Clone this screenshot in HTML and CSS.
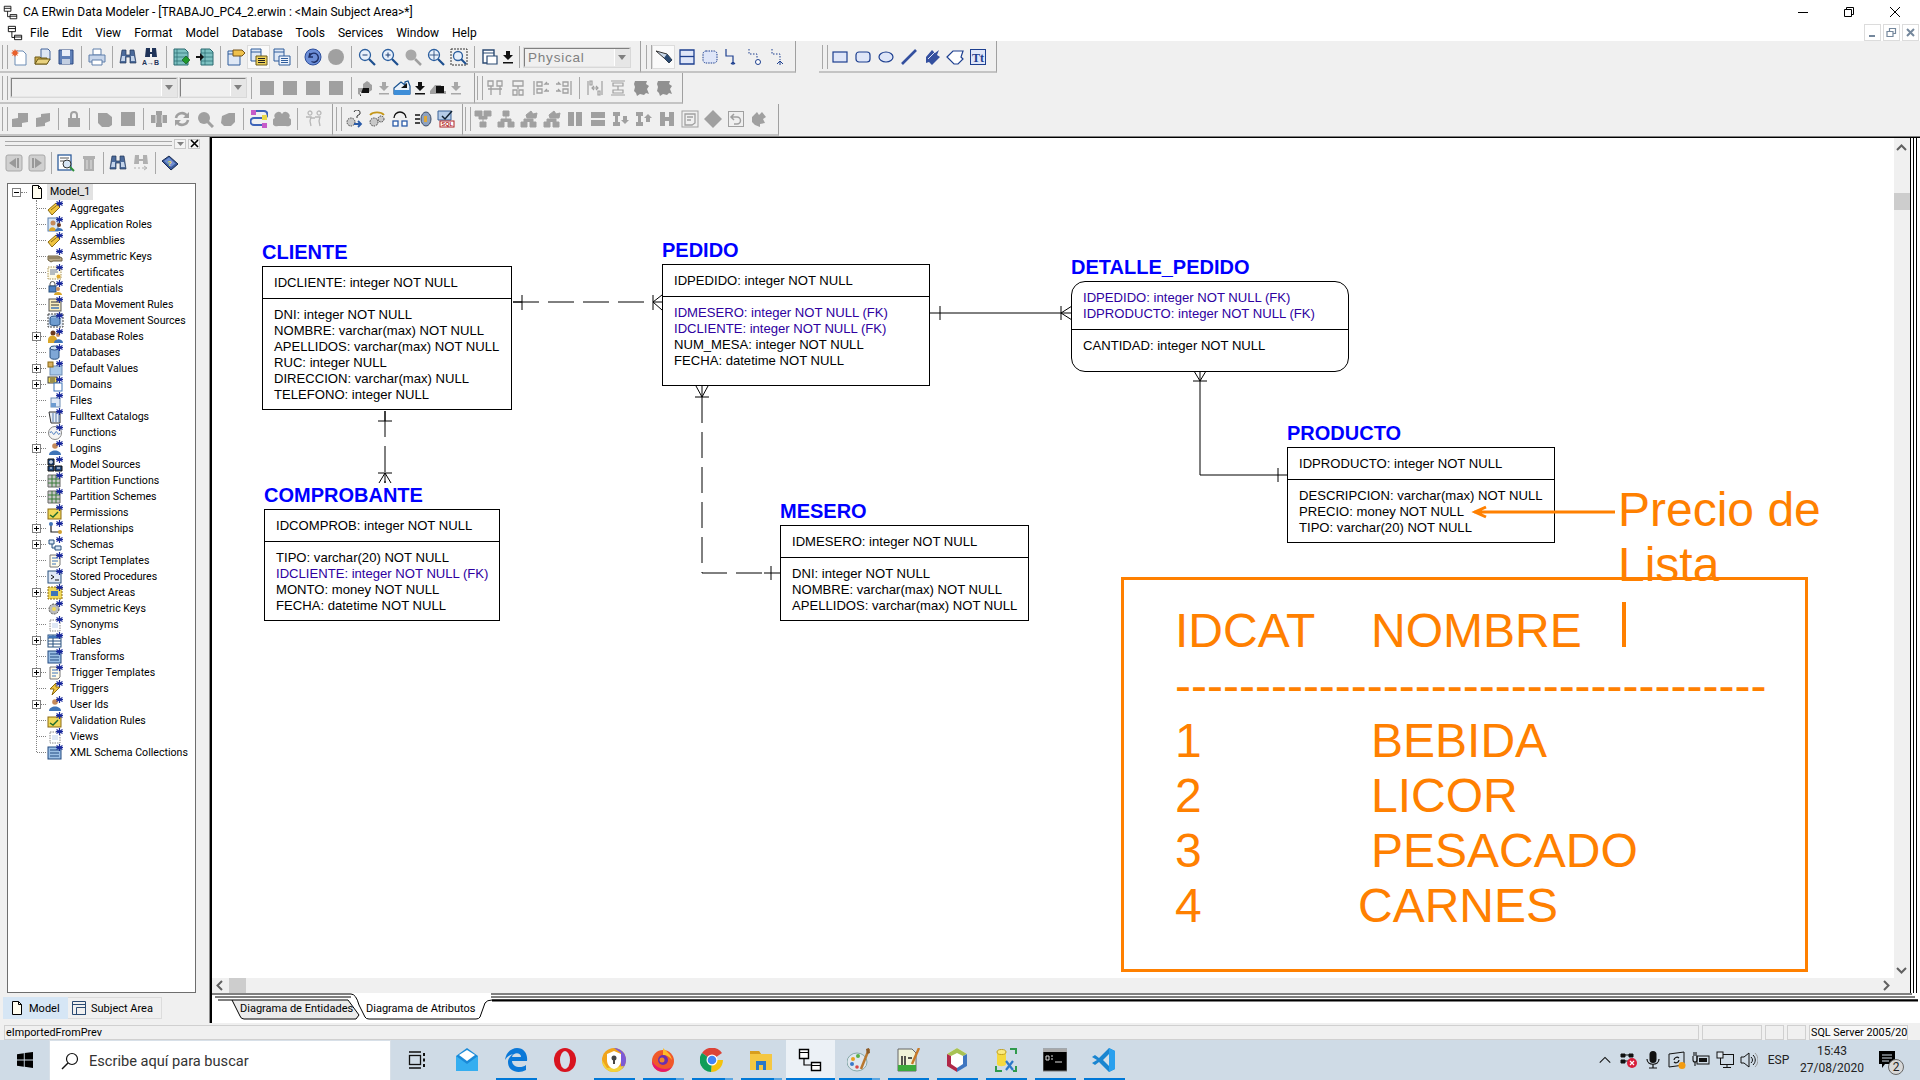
FILE: index.html
```html
<!DOCTYPE html>
<html lang="es">
<head>
<meta charset="utf-8">
<title>CA ERwin Data Modeler</title>
<link rel="stylesheet" href="styles.css">
</head>
<body>
<svg class="defs" width="0" height="0" aria-hidden="true">
<defs>
<symbol id="erd" viewBox="0 0 18 18"><path d="M1.5 1.5h8v6h-8zM1.5 4h8M8.5 11.5h8v5h-8zM8.5 13.5h8M5.5 7.5v6.5h3" fill="#fff" stroke="#000"/></symbol>
<symbol id="new" viewBox="0 0 18 18"><path d="M4 3h8l3 3v11H4z" fill="#fff" stroke="#6d8db5"/><path d="M4 1l1 2 2-1-1 2 2 1-2 1 1 2-2-1-1 2-1-2-2 1 1-2-2-1 2-1-1-2 2 1z" fill="#e8602c"/></symbol>
<symbol id="open" viewBox="0 0 18 18"><path d="M7 1h7l2 2v9H7z" fill="#dfe8f5" stroke="#44659b"/><path d="M1 9h5l1 1h6v6H1z" fill="#c9a94b" stroke="#6c5a18"/><path d="M1 16l3-5h12l-3 5z" fill="#e9d27f" stroke="#6c5a18"/></symbol>
<symbol id="save" viewBox="0 0 18 18"><path d="M2 2h14v14H2z" fill="#5f80b8" stroke="#2f4b82"/><path d="M5 2h8v6H5z" fill="#e8eef8"/><path d="M5 11h8v5H5z" fill="#c3cfe2"/></symbol>
<symbol id="print" viewBox="0 0 18 18"><path d="M5 1h8v6H5z" fill="#fff" stroke="#5e7eaa"/><path d="M1 7h16v7H1z" fill="#c7d5ea" stroke="#5e7eaa"/><path d="M4 12h10v5H4z" fill="#fff" stroke="#5e7eaa"/></symbol>
<symbol id="bino" viewBox="0 0 18 18"><path d="M3 2h4v5h4V2h4l2 13h-6V9H7v6H1z" fill="#4b6a9a" stroke="#1f3358" stroke-width=".7"/><path d="M3 8h3v5H2zM12 8h3l1 5h-4z" fill="#c4d4ea"/></symbol>
<symbol id="binoab" viewBox="0 0 18 18"><path d="M4 0h4v4h2V0h4l1 9h-5V6H8v3H3z" fill="#1f3358"/><text x="0" y="17" font-size="7" font-weight="700" font-family="Liberation Sans" fill="#1f3358">A→B</text></symbol>
<symbol id="entin" viewBox="0 0 18 18"><path d="M1 1h11l3 3v13H1z" fill="#7cc0c0" stroke="#2a6a70"/><path d="M4 1v16M1 5h14M1 9h14M1 13h14" stroke="#2a6a70" stroke-width=".7"/><path d="M13 8l4 4-4 4-4-4z" fill="#1f9a2c" stroke="#14491a" stroke-width=".6"/></symbol>
<symbol id="entout" viewBox="0 0 18 18"><path d="M5 1h9l3 3v13H5z" fill="#7cc0c0" stroke="#2a6a70"/><path d="M9 1v16M5 5h12M5 9h12M5 13h12" stroke="#2a6a70" stroke-width=".7"/><path d="M0 8h4V5l4 4-4 4v-3H0z" fill="#111"/></symbol>
<symbol id="tag" viewBox="0 0 18 18"><path d="M1 3h12v14H1z" fill="#dfe8f5" stroke="#2f5d9b"/><path d="M1 6h12" stroke="#2f5d9b"/><path d="M6 2h9l3 3-3 3H6z" fill="#efc14b" stroke="#77551a"/></symbol>
<symbol id="listy" viewBox="0 0 18 18"><path d="M1 1h10v12H1z" fill="#dfe8f5" stroke="#2f5d9b"/><path d="M1 4h10" stroke="#2f5d9b"/><path d="M6 8h11v9H6z" fill="#efd35d" stroke="#6c5a18"/><path d="M8 10.500h7M8 12.500h7M8 14.500h7" stroke="#222"/></symbol>
<symbol id="listb" viewBox="0 0 18 18"><path d="M1 1h10v12H1z" fill="#dfe8f5" stroke="#2f5d9b"/><path d="M1 4h10" stroke="#2f5d9b"/><path d="M6 8h11v9H6z" fill="#eef3fb" stroke="#2f5d9b"/><path d="M8 10.500h7M8 12.500h7M8 14.500h7" stroke="#2f5d9b"/></symbol>
<symbol id="undo" viewBox="0 0 18 18"><circle cx="9" cy="9" r="8" fill="#6d8fd8" stroke="#2c4e9c"/><path d="M6 5l-1 4 4 0M5.500 8.500a4.500 4.500 0 1 1 2 5" fill="none" stroke="#1d2f66" stroke-width="1.400"/></symbol>
<symbol id="dot" viewBox="0 0 18 18"><circle cx="9" cy="9" r="8" fill="#a0a0a0"/></symbol>
<symbol id="zoomm" viewBox="0 0 18 18"><circle cx="7" cy="7" r="5.500" fill="#e8f0fb" stroke="#2c5f9f" stroke-width="1.300"/><path d="M4.500 7h5" stroke="#1d3f75"/><path d="M11 11l6 6" stroke="#1d4f8f" stroke-width="2.200"/></symbol>
<symbol id="zoomp" viewBox="0 0 18 18"><circle cx="7" cy="7" r="5.500" fill="#e8f0fb" stroke="#2c5f9f" stroke-width="1.300"/><path d="M4.500 7h5M7 4.500v5" stroke="#1d3f75"/><path d="M11 11l6 6" stroke="#1d4f8f" stroke-width="2.200"/></symbol>
<symbol id="zoomg" viewBox="0 0 18 18"><circle cx="7" cy="7" r="5.500" fill="#a8a8a8"/><path d="M11 11l6 6" stroke="#a0a0a0" stroke-width="2.500"/></symbol>
<symbol id="zoomt" viewBox="0 0 18 18"><circle cx="7" cy="7" r="5.500" fill="#e8f0fb" stroke="#2c5f9f" stroke-width="1.300"/><path d="M7 2.500v9M2.500 7h9" stroke="#1d3f75" stroke-width=".8"/><path d="M11 11l6 6" stroke="#1d4f8f" stroke-width="2.200"/></symbol>
<symbol id="zoomf" viewBox="0 0 18 18"><path d="M1 1h16v16H1z" fill="none" stroke="#333" stroke-dasharray="2 1"/><circle cx="8" cy="8" r="4.500" fill="#e8f0fb" stroke="#2c5f9f" stroke-width="1.300"/><path d="M11 11l5 5" stroke="#1d4f8f" stroke-width="2"/></symbol>
<symbol id="layout" viewBox="0 0 18 18"><path d="M2 2h11v13H2z" fill="#fff" stroke="#2b4a72" stroke-width="1.400"/><path d="M2 5h11M6 8h10v8H6z" fill="#fff" stroke="#2b4a72" stroke-width="1.200"/></symbol>
<symbol id="down" viewBox="0 0 14 18"><path d="M7 12L2 7h3V3h4v4h3zM2 14h10v1.500H2z" fill="#111"/></symbol>
<symbol id="downg" viewBox="0 0 14 18"><path d="M7 12L2 7h3V3h4v4h3zM2 14h10v1.500H2z" fill="#a8a8a8"/></symbol>
<symbol id="point" viewBox="0 0 18 18"><path d="M1 3l11 3 5 6-3 3-5-5z" fill="#c9d8ea" stroke="#333"/><path d="M9 10l3-4 5 6-3 3z" fill="#2b4a72"/></symbol>
<symbol id="entity" viewBox="0 0 18 18"><path d="M2 2h14v14H2z" fill="#dfe6f8" stroke="#1d3f8f" stroke-width="1.300"/><path d="M2 8.500h14" stroke="#1d3f8f" stroke-width="1.300"/></symbol>
<symbol id="view" viewBox="0 0 18 18"><rect x="2" y="3" width="14" height="12" rx="3" fill="#dfe6f8" stroke="#1d3f8f" stroke-dasharray="1.500 1"/></symbol>
<symbol id="rel1" viewBox="0 0 18 18"><path d="M2 1v7h7v6M7 16l2-2 2 2M9 14v3" fill="none" stroke="#1d3f8f" stroke-width="1.200"/></symbol>
<symbol id="rel2" viewBox="0 0 18 18"><path d="M2 1v5h8v5" fill="none" stroke="#1d3f8f" stroke-dasharray="1.500 1.500"/><circle cx="11" cy="14" r="2.500" fill="#fff" stroke="#1d3f8f"/></symbol>
<symbol id="rel3" viewBox="0 0 18 18"><path d="M2 1v5h8v6" fill="none" stroke="#1d3f8f" stroke-dasharray="1.500 1.500"/><path d="M7 16l3-3 3 3M10 13v4" fill="none" stroke="#1d3f8f"/></symbol>
<symbol id="drect" viewBox="0 0 18 18"><rect x="2" y="4" width="14" height="10" fill="#dfe6f8" stroke="#1d3f8f" stroke-width="1.200"/></symbol>
<symbol id="drrect" viewBox="0 0 18 18"><rect x="2" y="4" width="14" height="10" rx="3" fill="#dfe6f8" stroke="#1d3f8f" stroke-width="1.200"/></symbol>
<symbol id="dell" viewBox="0 0 18 18"><ellipse cx="9" cy="9" rx="7" ry="5" fill="#dfe6f8" stroke="#1d3f8f" stroke-width="1.200"/></symbol>
<symbol id="dline" viewBox="0 0 18 18"><path d="M2 16L16 2" stroke="#34509f" stroke-width="2.600"/></symbol>
<symbol id="dpin" viewBox="0 0 18 18"><path d="M3 9l6-7 3 3 4-3-2 5 3 2-8 8-3-3-3 1z" fill="#34509f"/><path d="M5 11l7-7" stroke="#dfe6f8"/></symbol>
<symbol id="dtag" viewBox="0 0 18 18"><path d="M1 9l6-6h10l-2 6 2 2-5 5H8z" fill="#fff" stroke="#1d3f8f" stroke-width="1.200"/></symbol>
<symbol id="dtext" viewBox="0 0 18 18"><rect x="1.500" y="1.500" width="15" height="15" fill="#dfe6f8" stroke="#1d3f8f"/><text x="3" y="14" font-size="12" font-weight="700" font-family="Liberation Serif" fill="#1d3f8f">Tt</text></symbol>
<symbol id="gsq" viewBox="0 0 18 18"><rect x="2" y="2" width="14" height="14" fill="#a0a0a0"/></symbol>
<symbol id="gh1" viewBox="0 0 18 18"><path d="M1 9h5V5l4-3h0v4l2-2 3 2v5l-3 2H3v3l-2-1zM10 2l3 2-3 3z" fill="#a0a0a0"/><path d="M6 9h6v5H4v3H3z" fill="#111"/></symbol>
<symbol id="gh2" viewBox="0 0 18 18"><path d="M1 15V9l7-6 4 3V3l3-1 2 5v8z" fill="#eaf2fb" stroke="#16508f" stroke-width="1.200"/><path d="M1 11h16v5H1z" fill="#3e8ed8"/><path d="M8 9l6-5v5z" fill="#111"/></symbol>
<symbol id="gh3" viewBox="0 0 18 18"><path d="M1 12l5-6h6v6h5v3H1z" fill="#a0a0a0"/><path d="M7 7h8v7H7z" fill="#111"/></symbol>
<symbol id="gal1" viewBox="0 0 18 18"><path d="M2 2h5v5H2zM11 2h5v5h-5zM2 10h14M5 7v9M14 7v9" fill="none" stroke="#a0a0a0" stroke-width="1.300"/></symbol>
<symbol id="gal2" viewBox="0 0 18 18"><path d="M4 2h10v5H4zM9 7v3M4 11h4v5H4zM10 11h4v5h-4z" fill="none" stroke="#a0a0a0" stroke-width="1.300"/></symbol>
<symbol id="gal3" viewBox="0 0 18 18"><path d="M2 2v14M5 3h5v4H5zM5 10h5v4H5zM17 5h-4l2-2M17 12h-4l2-2" fill="none" stroke="#a0a0a0" stroke-width="1.300"/></symbol>
<symbol id="gal4" viewBox="0 0 18 18"><path d="M16 2v14M8 3h5v4H8zM8 10h5v4H8zM1 5h4l-2-2M1 12h4l-2-2" fill="none" stroke="#a0a0a0" stroke-width="1.300"/></symbol>
<symbol id="gal5" viewBox="0 0 18 18"><path d="M2 2v14M16 2v14M4 2h2v4H4zM12 12h2v4h-2zM6 9h6M8 7l-2 2 2 2M10 7l2 2-2 2" fill="none" stroke="#a0a0a0" stroke-width="1.200"/></symbol>
<symbol id="gal6" viewBox="0 0 18 18"><path d="M2 2h14M2 16h14M4 4h10v3H4zM4 11h10v3H4zM9 7v4" fill="none" stroke="#a0a0a0" stroke-width="1.200"/></symbol>
<symbol id="gal7" viewBox="0 0 18 18"><path d="M3 2h12l-1 3 3 2-2 3 2 5-3-1-2 2-4-1-3 2-1-3-2-2 1-4-1-3z" fill="#909090"/></symbol>
<symbol id="g1" viewBox="0 0 18 18"><path d="M1 9l6-1V3h10v9l-6 1v4H1z" fill="#a0a0a0"/></symbol>
<symbol id="g2" viewBox="0 0 18 18"><path d="M2 8l5-1V4l9-1v8l-5 2v3l-9 1z" fill="#a0a0a0"/></symbol>
<symbol id="glock" viewBox="0 0 18 18"><path d="M5 8V5a4 4 0 0 1 8 0v3h2v9H3V8zM7 8h4V5a2 2 0 0 0-4 0z" fill="#a0a0a0" fill-rule="evenodd"/></symbol>
<symbol id="gblob" viewBox="0 0 18 18"><path d="M2 3h9l5 4v8l-3 2H6l-4-4z" fill="#a0a0a0"/></symbol>
<symbol id="gpuz" viewBox="0 0 18 18"><path d="M6 1h6v4h5v8h-5v4H6v-4H1V5h5z" fill="#a0a0a0"/><path d="M6 5v8M12 5v8" stroke="#f0f0f0"/></symbol>
<symbol id="gref" viewBox="0 0 18 18"><path d="M3 8a6 6 0 0 1 11-2M15 10a6 6 0 0 1-11 2" fill="none" stroke="#a0a0a0" stroke-width="2.600"/><path d="M16 2v6h-6zM2 16v-6h6z" fill="#a0a0a0"/></symbol>
<symbol id="gmag" viewBox="0 0 18 18"><circle cx="8" cy="8" r="6" fill="#a0a0a0"/><path d="M11 11l6 6" stroke="#a0a0a0" stroke-width="3"/></symbol>
<symbol id="gsh" viewBox="0 0 18 18"><path d="M3 6l7-3h6v9l-4 4H5l-3-3z" fill="#a0a0a0"/></symbol>
<symbol id="rela" viewBox="0 0 18 18"><path d="M5 1h9a3 3 0 0 1 0 7H4a3 3 0 0 0 0 7h9" fill="none" stroke="#3d63b8" stroke-width="2"/><rect x="1" y="0" width="5" height="5" fill="#c65bc9"/><rect x="12" y="5" width="5" height="5" fill="#e8d84a"/><rect x="12" y="13" width="5" height="5" fill="#c65bc9"/></symbol>
<symbol id="gcl" viewBox="0 0 18 18"><path d="M2 8a4 4 0 0 1 7-4 4 4 0 0 1 7 4 4 4 0 0 1-3 8H5a4 4 0 0 1-3-8z" fill="#a0a0a0"/></symbol>
<symbol id="gppl" viewBox="0 0 18 18"><path d="M4 3a2 2 0 1 1 0 .1M13 3a2 2 0 1 1 0 .1M2 7h5l-1 4 1 5M11 7h5l-1 4 1 5M7 8h4" fill="none" stroke="#b8b8b8" stroke-width="1.300"/></symbol>
<symbol id="gear1" viewBox="0 0 18 18"><circle cx="6" cy="12" r="4" fill="#c9c9c9" stroke="#444" stroke-dasharray="1.500 1"/><path d="M9 14h7M13 11l3 3-3 3" fill="none" stroke="#2a5ba8" stroke-width="1.800"/><path d="M9 2a3 3 0 0 1 6 2l-3 2v2" fill="none" stroke="#333"/></symbol>
<symbol id="gear2" viewBox="0 0 18 18"><circle cx="6" cy="12" r="4" fill="#c9c9c9" stroke="#444" stroke-dasharray="1.500 1"/><circle cx="13" cy="9" r="3" fill="#c9c9c9" stroke="#444" stroke-dasharray="1.500 1"/><path d="M2 5a8 5 0 0 1 14 0" fill="none" stroke="#c49618" stroke-width="1.800"/></symbol>
<symbol id="brack" viewBox="0 0 18 18"><path d="M3 8a6 6 0 0 1 12 0" fill="none" stroke="#111" stroke-width="1.300"/><rect x="2" y="11" width="5" height="5" fill="#fff" stroke="#2a5ba8" stroke-width="1.300"/><rect x="11" y="11" width="5" height="5" fill="#fff" stroke="#2a5ba8" stroke-width="1.300"/></symbol>
<symbol id="cylm" viewBox="0 0 18 18"><path d="M1 5h5M1 9h5M1 13h5" stroke="#111" stroke-width="1.300"/><ellipse cx="12" cy="9" rx="5" ry="7" fill="#8ea2bf" stroke="#3c4c66"/><rect x="10" y="6" width="3" height="6" fill="#e0a838"/></symbol>
<symbol id="sql" viewBox="0 0 18 18"><path d="M1 1h13v9H1z" fill="#b5cce8" stroke="#3a6398"/><path d="M5 6l3 3 7-8" fill="none" stroke="#123" stroke-width="1.500"/><rect x="3" y="11" width="14" height="6" fill="#fff" stroke="#b02020"/><text x="4.500" y="16" font-size="5.500" font-weight="700" font-family="Liberation Sans" fill="#b02020">SQL</text></symbol>
<symbol id="gtree" viewBox="0 0 18 18"><path d="M1 1h7v5H1zM10 1h7v5h-7zM6 12h6v5H6zM5 6v3h8V6M9 9v3" fill="#a0a0a0" stroke="#a0a0a0"/></symbol>
<symbol id="gorg" viewBox="0 0 18 18"><path d="M6 1h6v5H6zM1 12h6v5H1zM11 12h6v5h-6zM4 12V9h10v3M9 6v3" fill="#a0a0a0" stroke="#a0a0a0"/></symbol>
<symbol id="gorg2" viewBox="0 0 18 18"><path d="M1 12h6v5H1zM10 12h6v5h-6zM4 12V9h9v3M6 5l5-4 2 3 4-1-1 5H7z" fill="#a0a0a0" stroke="#a0a0a0"/></symbol>
<symbol id="gcols" viewBox="0 0 18 18"><path d="M2 2h6v14H2zM10 2h6v14h-6z" fill="#a0a0a0"/></symbol>
<symbol id="grows" viewBox="0 0 18 18"><path d="M2 2h14v6H2zM2 10h14v6H2z" fill="#a0a0a0"/></symbol>
<symbol id="gid" viewBox="0 0 18 18"><path d="M1 2h7v4H6v6h2v4H1v-4h2V6H1z" fill="#a0a0a0"/><path d="M13 14l-4-4h2V6h4v4h2z" fill="#a0a0a0"/></symbol>
<symbol id="giu" viewBox="0 0 18 18"><path d="M1 2h7v4H6v6h2v4H1v-4h2V6H1z" fill="#a0a0a0"/><path d="M13 4l-4 4h2v4h4V8h2z" fill="#a0a0a0"/></symbol>
<symbol id="gh" viewBox="0 0 18 18"><path d="M2 2h5v5h4V2h5v14h-5v-5H7v5H2z" fill="#a0a0a0"/></symbol>
<symbol id="gnote" viewBox="0 0 18 18"><rect x="1" y="1" width="16" height="16" fill="#f0f0f0" stroke="#a0a0a0"/><path d="M4 4h10v9l-3 2H4zM6 7h6M6 10h4" fill="none" stroke="#a0a0a0" stroke-width="1.300"/></symbol>
<symbol id="gdia" viewBox="0 0 18 18"><path d="M9 0l9 9-9 9-9-9z" fill="#a0a0a0"/></symbol>
<symbol id="gback" viewBox="0 0 18 18"><rect x="1.500" y="1.500" width="15" height="15" fill="#f0f0f0" stroke="#a0a0a0"/><path d="M7 4L4 7l3 3M4 7h6a3 3 0 0 1 0 7H7" fill="none" stroke="#a0a0a0" stroke-width="1.500"/></symbol>
<symbol id="gfin" viewBox="0 0 18 18"><path d="M2 7l5-5 2 3 3-3 4 5-3 2 2 4-5 1v3l-5-2-3-3z" fill="#a0a0a0"/></symbol>
<symbol id="gprev" viewBox="0 0 18 18"><rect x="1" y="1" width="16" height="16" rx="2" fill="#d0d0d0" stroke="#a8a8a8"/><path d="M11 4v10L4 9z" fill="#999"/><rect x="12" y="4" width="2" height="10" fill="#999"/></symbol>
<symbol id="gnext" viewBox="0 0 18 18"><rect x="1" y="1" width="16" height="16" rx="2" fill="#d0d0d0" stroke="#a8a8a8"/><path d="M7 4v10l7-5z" fill="#999"/><rect x="4" y="4" width="2" height="10" fill="#999"/></symbol>
<symbol id="prop" viewBox="0 0 18 18"><rect x="1" y="1" width="13" height="15" fill="#fff" stroke="#2f5d9b" stroke-width="1.300"/><path d="M3 4h9M3 7h4" stroke="#555"/><circle cx="10" cy="10" r="4" fill="#d8e6f5" stroke="#333"/><path d="M13 13l4 4" stroke="#2c8f3c" stroke-width="2"/></symbol>
<symbol id="gtrash" viewBox="0 0 18 18"><path d="M3 2h12v3h-1v12H4V5H3z" fill="#b0b0b0"/><path d="M7 6v9M11 6v9" stroke="#e0e0e0"/></symbol>
<symbol id="gbinoab" viewBox="0 0 18 18"><path d="M3 1h4v4h4V1h4l1 9h-5V7H7v3H2z" fill="#b0b0b0"/><path d="M2 14h2M6 14h2M10 14h4M12 12l3 2-3 2" fill="none" stroke="#b0b0b0"/></symbol>
<symbol id="book" viewBox="0 0 18 18"><path d="M1 7l7-5 9 8-7 6z" fill="#3b5a9e" stroke="#16294f"/><path d="M3 7l5-3.500 6.500 6L10 13z" fill="#6f8fd0"/><text x="6.500" y="11.500" font-size="7" font-weight="700" font-family="Liberation Sans" fill="#f0e050">?</text></symbol>

<symbol id="ast" viewBox="0 0 17 16"><path d="M12.500 0v7M9.500 1.500l6 4M15.500 1.500l-6 4M9 3.500h7" stroke="#1a2a9c" stroke-width="1.200"/></symbol>
<symbol id="t-tag" viewBox="0 0 17 16"><path d="M1 10l8-7 4 4-8 8z" fill="#f0c540" stroke="#8c6a12"/><path d="M4 10l5-4" stroke="#8c6a12"/><use href="#ast"/></symbol>
<symbol id="t-ppl" viewBox="0 0 17 16"><rect x="1" y="2" width="10" height="13" fill="#d8e6f5" stroke="#5a7fae"/><circle cx="6" cy="7" r="2.500" fill="#c58a5a"/><path d="M2 15c0-5 7-5 7 0z" fill="#d9a62a"/><circle cx="12" cy="9" r="2" fill="#6a3a20"/><path d="M8 15c0-4 8-4 8 0z" fill="#3f74b8"/><use href="#ast"/></symbol>
<symbol id="t-key" viewBox="0 0 17 16"><path d="M1 8h10l4 2v3H6l-2 1-3-2z" fill="#b8a887" stroke="#6e6040"/><path d="M2 10h11" stroke="#6e6040"/><use href="#ast"/></symbol>
<symbol id="t-cert" viewBox="0 0 17 16"><rect x="1" y="3" width="13" height="12" fill="#fffbe8" stroke="#a89255" stroke-dasharray="1.500 1"/><path d="M3 6h7M3 8h8M3 10h5" stroke="#6d7d98"/><circle cx="11.500" cy="12.500" r="2" fill="#e0a828"/><use href="#ast"/></symbol>
<symbol id="t-lock" viewBox="0 0 17 16"><path d="M3 4a2.500 2.500 0 0 1 5 0v2H3z" fill="none" stroke="#555"/><rect x="2" y="6" width="7" height="6" fill="#4f7fc0" stroke="#28507f"/><circle cx="11" cy="9" r="2" fill="#c58a5a"/><path d="M7 15c0-4 8-4 8 0z" fill="#d9a62a"/><use href="#ast"/></symbol>
<symbol id="t-doc" viewBox="0 0 17 16"><rect x="2" y="3" width="12" height="12" fill="#f8edc0" stroke="#555"/><path d="M4 6h8M4 9h8" stroke="#333"/><path d="M4 12h8" stroke="#3f74b8" stroke-width="1.500"/><use href="#ast"/></symbol>
<symbol id="t-src" viewBox="0 0 17 16"><rect x="1" y="2" width="15" height="13" fill="#dfe8f5" stroke="#444" stroke-dasharray="2 1"/><ellipse cx="8" cy="6" rx="5" ry="2" fill="#8fb3dc" stroke="#28507f"/><path d="M3 6v6c0 2 10 2 10 0V6" fill="#6e9cd0" stroke="#28507f"/><use href="#ast"/></symbol>
<symbol id="t-role" viewBox="0 0 17 16"><circle cx="6" cy="5" r="2.500" fill="#6a3a20"/><path d="M1 12c0-6 9-6 9 0v3H1z" fill="#d9a62a"/><circle cx="11" cy="7" r="2" fill="#c58a5a"/><path d="M7 15c0-5 9-5 9 0z" fill="#3f74b8"/><use href="#ast"/></symbol>
<symbol id="t-cyl" viewBox="0 0 17 16"><path d="M3 4v9c0 3 9 3 9 0V4z" fill="#7fa7d6" stroke="#28507f"/><ellipse cx="7.500" cy="4" rx="4.500" ry="2" fill="#cfe0f2" stroke="#28507f"/><use href="#ast"/></symbol>
<symbol id="t-box" viewBox="0 0 17 16"><rect x="3" y="6" width="12" height="9" fill="#a8c8e8" stroke="#6d8db5"/><rect x="1" y="2" width="5" height="5" fill="#d8b060" stroke="#8c6a12"/><use href="#ast"/></symbol>
<symbol id="t-dom" viewBox="0 0 17 16"><rect x="1" y="1" width="9" height="6" fill="#f0d858" stroke="#444"/><path d="M3 3h5M3 5h5" stroke="#444"/><rect x="7" y="7" width="8" height="8" fill="#fff" stroke="#3f74b8"/><use href="#ast"/></symbol>
<symbol id="t-file" viewBox="0 0 17 16"><rect x="4" y="6" width="9" height="9" fill="#dfe8f5" stroke="#6d8db5"/><rect x="4" y="11" width="5" height="4" fill="#6d9bd0"/><use href="#ast"/></symbol>
<symbol id="t-cat" viewBox="0 0 17 16"><path d="M2 4h11v11H4z" fill="#e8eef5" stroke="#333"/><path d="M6 5v9M9 5v9M12 5v9" stroke="#5a7fae"/><use href="#ast"/></symbol>
<symbol id="t-fn" viewBox="0 0 17 16"><circle cx="8" cy="9" r="6.500" fill="#f4f4f4" stroke="#888"/><path d="M3 9c2-5 3 5 5 0s3 5 5 0" fill="none" stroke="#4f7fc0"/><use href="#ast"/></symbol>
<symbol id="t-log" viewBox="0 0 17 16"><circle cx="8" cy="6" r="2.800" fill="#c58a5a"/><path d="M2 15c0-6 12-6 12 0z" fill="#3f74b8"/><use href="#ast"/></symbol>
<symbol id="t-grid" viewBox="0 0 17 16"><path d="M1 3h6v6H1zM1 10h6v5H1zM8 10h7v5H8z" fill="#234a80" stroke="#111"/><path d="M4 4v4M2 6h4M3 12h2M10 12h3" stroke="#fff"/><use href="#ast"/></symbol>
<symbol id="t-part" viewBox="0 0 17 16"><path d="M1 3h12v12H1z" fill="#c8c8c8" stroke="#666"/><path d="M5 3v12M9 3v12M1 7h12M1 11h12" stroke="#3a7a3a"/><use href="#ast"/></symbol>
<symbol id="t-perm" viewBox="0 0 17 16"><rect x="1" y="5" width="13" height="10" fill="#f0d858" stroke="#8c6a12"/><path d="M3 11l3 2 5-5" stroke="#1d6a2c" fill="none" stroke-width="1.400"/><use href="#ast"/></symbol>
<symbol id="t-rel" viewBox="0 0 17 16"><path d="M4 3v9h8" fill="none" stroke="#222" stroke-width="1.200"/><circle cx="4" cy="4" r="2" fill="#3f74b8"/><circle cx="13" cy="12" r="2" fill="#d0a030"/><use href="#ast"/></symbol>
<symbol id="t-sch" viewBox="0 0 17 16"><path d="M2 4h5v4H2zM8 10h6v4H8zM5 8v4h3" fill="#d8e6f5" stroke="#28507f"/><use href="#ast"/></symbol>
<symbol id="t-scr" viewBox="0 0 17 16"><path d="M3 3h10v10l-2 2H3z" fill="#fffbe8" stroke="#777"/><path d="M5 6h6M5 9h6M5 12h4" stroke="#3f74b8"/><use href="#ast"/></symbol>
<symbol id="t-prc" viewBox="0 0 17 16"><rect x="1" y="3" width="13" height="12" fill="#dfe8f5" stroke="#28507f"/><path d="M4 7l3 2-3 2M8 12h4" fill="none" stroke="#111"/><use href="#ast"/></symbol>
<symbol id="t-area" viewBox="0 0 17 16"><rect x="1" y="3" width="14" height="12" fill="#f0d858" stroke="#8c6a12" stroke-dasharray="2 1"/><rect x="4" y="7" width="7" height="5" fill="#3f74b8"/><use href="#ast"/></symbol>
<symbol id="t-gear" viewBox="0 0 17 16"><circle cx="7" cy="9" r="5" fill="#bcbcbc" stroke="#555" stroke-dasharray="2 1"/><circle cx="7" cy="9" r="2" fill="#f0d858"/><use href="#ast"/></symbol>
<symbol id="t-tab" viewBox="0 0 17 16"><rect x="1" y="3" width="13" height="12" fill="#fff" stroke="#28507f"/><path d="M1 6h13M1 9h13M1 12h13M6 3v12" stroke="#28507f"/><rect x="1.500" y="3.500" width="12" height="2.500" fill="#3f74b8"/><use href="#ast"/></symbol>
<symbol id="t-trig" viewBox="0 0 17 16"><path d="M9 3L3 9h4l-2 6 8-8H9z" fill="#f0c540" stroke="#8c6a12"/><use href="#ast"/></symbol>
<symbol id="t-view" viewBox="0 0 17 16"><path d="M3 4h10v11H3z" fill="#fff" stroke="#888" stroke-dasharray="1.500 1"/><rect x="5" y="7" width="6" height="5" fill="#dfe8f5"/><use href="#ast"/></symbol>
<symbol id="t-xml" viewBox="0 0 17 16"><rect x="1" y="3" width="13" height="12" fill="#9cc0e6" stroke="#234a80"/><path d="M3 6h9M3 9h9M3 12h9" stroke="#234a80"/><use href="#ast"/></symbol>

<symbol id="win" viewBox="0 0 16 16"><path d="M0 2.200l6.800-1v6.300H0zM7.700 1.100L16 0v7.500H7.700zM0 8.400h6.800v6.400l-6.800-1zM7.700 8.400H16V16l-8.300-1.200z" fill="#000"/></symbol>
<symbol id="srch" viewBox="0 0 18 18"><circle cx="11" cy="7" r="5.500" fill="none" stroke="#111" stroke-width="1.200"/><path d="M7 11l-6 6" stroke="#111" stroke-width="1.500"/></symbol>
<symbol id="tv" viewBox="0 0 18 18"><path d="M1 1h12M1 17h12" stroke="#111" stroke-width="1.500"/><rect x="1.500" y="4.500" width="11" height="9" fill="none" stroke="#111" stroke-width="1.300"/><path d="M16 2v3M16 7.500v3M16 13v3" stroke="#111" stroke-width="2"/></symbol>
<symbol id="mail" viewBox="0 0 24 24"><path d="M1 8L12 0l11 8v15H1z" fill="#1b8ad8"/><path d="M1 8l11 8 11-8v15H1z" fill="#35aef0"/><path d="M4 7l8-5 8 5-8 6z" fill="#fff"/></symbol>
<symbol id="edge" viewBox="0 0 24 24"><path d="M1 12C2 4 8 0 13 0c7 0 11 6 10 13H8c0 6 9 8 14 4v5c-7 4-18 2-18-8 0-3 2-6 5-8-4 1-7 4-8 6zM8 9h9c0-5-8-5-9 0z" fill="#0a78d8"/></symbol>
<symbol id="opera" viewBox="0 0 24 24"><ellipse cx="12" cy="12" rx="11" ry="12" fill="#d8141f"/><ellipse cx="12" cy="12" rx="5" ry="9" fill="#d4dfe8"/></symbol>
<symbol id="avast" viewBox="0 0 24 24"><circle cx="12" cy="12" r="12" fill="#f0a41c"/><path d="M12 0a12 12 0 0 1 12 12c0 4-2 8-5 9V5z" fill="#7d5ad6"/><path d="M0 12c0 6 5 12 12 12 5 0 8-3 10-6L5 20z" fill="#f2d33a"/><path d="M12 3l7 3v6c0 5-3 8-7 9-4-1-7-4-7-9V6z" fill="#fff"/><circle cx="12" cy="10" r="2.500" fill="#444"/><rect x="11" y="11" width="2" height="5" fill="#444"/></symbol>
<symbol id="fox" viewBox="0 0 24 24"><circle cx="12" cy="13" r="11" fill="#f0582a"/><path d="M1 13a11 11 0 0 0 20 6c-6 4-16 2-20-6z" fill="#e6186e"/><path d="M12 0c3 3 8 6 9 12-2-3-5-5-9-5z" fill="#ffbc2a"/><circle cx="12" cy="12" r="5" fill="#6b2fb0"/><circle cx="11" cy="12" r="2.500" fill="#f08a2a"/></symbol>
<symbol id="chrome" viewBox="0 0 24 24"><path d="M12 12L2 5a12 12 0 0 1 20 0z" fill="#db4437"/><path d="M12 12H23a12 12 0 0 1-12 12z" fill="#f4c20d"/><path d="M12 12l-1 12A12 12 0 0 1 2 5z" fill="#0f9d58"/><circle cx="12" cy="12" r="5.500" fill="#fff"/><circle cx="12" cy="12" r="4.300" fill="#4285f4"/></symbol>
<symbol id="expl" viewBox="0 0 24 24"><path d="M1 3h9l2 3h11v16H1z" fill="#f5c742"/><path d="M1 3h9l2 3H1z" fill="#d89e1e"/><path d="M7 22v-9h10v9h-3v-5h-4v5z" fill="#2a78c8"/></symbol>
<symbol id="etask" viewBox="0 0 24 24"><path d="M1.500 1.500h9v9h-9z" fill="#fff" stroke="#000" stroke-width="1.400"/><path d="M1.500 4.500h9" stroke="#000"/><path d="M13.500 14.500h9v8h-9z" fill="#fff" stroke="#000" stroke-width="1.400"/><path d="M13.500 17.500h9" stroke="#000"/><path d="M6 10.500v6.500h7.500" fill="none" stroke="#000" stroke-width="1.200"/></symbol>
<symbol id="paint" viewBox="0 0 24 24"><ellipse cx="10" cy="14" rx="10" ry="9" fill="#dfe7ee" stroke="#8aa"/><circle cx="6" cy="11" r="2" fill="#e8a020"/><circle cx="11" cy="8" r="2" fill="#58b048"/><circle cx="5" cy="16" r="2" fill="#3a78c8"/><circle cx="10" cy="19" r="1.800" fill="#d84848"/><path d="M22 1l-8 20" stroke="#b87830" stroke-width="2.500"/><path d="M22 0l-3 1 1 5 3-1z" fill="#8a5a28"/></symbol>
<symbol id="note" viewBox="0 0 24 24"><path d="M2 1h14l4 4v18H2z" fill="#eff3d8" stroke="#666"/><rect x="2" y="17" width="18" height="6" fill="#3caa3c"/><path d="M6 8v9M9 8v9M12 10h4" stroke="#222" stroke-width="1.500"/><path d="M23 0l-7 16" stroke="#c87a28" stroke-width="2.400"/></symbol>
<symbol id="vbox" viewBox="0 0 24 24"><path d="M12 0l10 6v12l-10 6L2 18V6z" fill="#fff"/><path d="M12 0l10 6-4 2-6-3-6 3-4-2z" fill="#a8c254"/><path d="M2 6l4 2v8l6 4v4L2 18z" fill="#b02848"/><path d="M22 6l-4 2v8l-6 4v4l10-6z" fill="#3f76c0"/></symbol>
<symbol id="sqlt" viewBox="0 0 24 24"><path d="M3 4v12c0 3 9 3 9 0V4z" fill="#f5d93e"/><ellipse cx="7.500" cy="4" rx="4.500" ry="2.500" fill="#faea80" stroke="#c0a020"/><path d="M16 1h6v5M2 18v5h6M22 18v5h-3" fill="none" stroke="#2f9a4c" stroke-width="2"/><path d="M12 22l7-9M19 22l-7-9" stroke="#2a78c8" stroke-width="2.200"/></symbol>
<symbol id="cmd" viewBox="0 0 24 24"><rect x="0" y="1" width="24" height="22" fill="#000" stroke="#777"/><rect x="0" y="1" width="24" height="3" fill="#a8a8a8"/><path d="M3 8h3v4H3zM8 8h2M8 11h2M12 14h7" stroke="#ddd" fill="none"/></symbol>
<symbol id="vsc" viewBox="0 0 24 24"><path d="M17 0l6 3v18l-6 3L7 14l-4 3-3-2 5-3-5-3 3-2 4 3z" fill="#1a85d0"/><path d="M17 6l-6 6 6 6z" fill="#d4dfe8"/><path d="M17 0l6 3v18l-6 3z" fill="#2aa0ee"/></symbol>
<symbol id="chev" viewBox="0 0 16 16"><path d="M2 11l6-6 6 6" fill="none" stroke="#111" stroke-width="1.200"/></symbol>
<symbol id="dbx" viewBox="0 0 18 18"><path d="M1 3h4v3H1zM9 3h4v3H9zM1 9h4v3H1zM5 4h4M5 10h4" fill="#111" stroke="#111"/><circle cx="12" cy="12" r="5" fill="#d81e3a"/><path d="M10 10l4 4M14 10l-4 4" stroke="#fff" stroke-width="1.200"/></symbol>
<symbol id="mic" viewBox="0 0 18 18"><rect x="5.500" y="0" width="7" height="12" rx="3.500" fill="#111"/><path d="M3 8c0 7 12 7 12 0M9 13v4M5 17h8" fill="none" stroke="#111" stroke-width="1.200"/></symbol>
<symbol id="sync" viewBox="0 0 18 18"><path d="M1 3l15-2v13L1 16z" fill="none" stroke="#111"/><path d="M6 9a3 3 0 0 1 5-2M11 9a3 3 0 0 1-5 2" fill="none" stroke="#111" stroke-width="1.200"/><circle cx="14" cy="14.500" r="3.500" fill="#f39c12"/></symbol>
<symbol id="batt" viewBox="0 0 18 18"><rect x="5" y="5" width="12" height="8" fill="none" stroke="#111"/><rect x="7" y="7" width="8" height="4" fill="#111"/><path d="M1 5v4a2 2 0 0 0 4 0V5M2 1v4M4 1v4M3 11v4" fill="none" stroke="#111" stroke-width="1.100"/></symbol>
<symbol id="net" viewBox="0 0 18 18"><rect x="4.500" y="3.500" width="13" height="10" fill="none" stroke="#111"/><rect x="1" y="1" width="6" height="6" fill="#dfe7ee" stroke="#111"/><path d="M11 13v3M7 16.500h8" stroke="#111"/></symbol>
<symbol id="vol" viewBox="0 0 18 18"><path d="M1 6h3l5-4v14l-5-4H1z" fill="none" stroke="#111"/><path d="M11 6c2 2 2 4 0 6M13 4c3 3 3 7 0 10" fill="none" stroke="#111"/><path d="M15 2c4 4 4 10 0 14" fill="none" stroke="#999"/></symbol>
<symbol id="notif" viewBox="0 0 20 20"><path d="M1 1h16v13H7l-3 4v-4H1z" fill="#000"/><path d="M4 5h10M4 8h10M4 11h7" stroke="#d0dce6"/></symbol>
</defs>
</svg>

<div class="app">
  <header class="titlebar">
    <svg class="title-ic"><use href="#erd"/></svg>
    <span class="title-txt">CA ERwin Data Modeler - [TRABAJO_PC4_2.erwin : &lt;Main Subject Area&gt;*]</span>
    <div class="winctl">
      <svg width="45" height="16" viewBox="0 0 45 16"><path d="M17 8.500h10" stroke="#000"/></svg>
      <svg width="46" height="16" viewBox="0 0 46 16"><path d="M18.500 5.500h7v7h-7zM20.500 5.500v-2h7v7h-2" fill="none" stroke="#000"/></svg>
      <svg width="46" height="16" viewBox="0 0 46 16"><path d="M18 3l10 10M28 3L18 13" stroke="#000"/></svg>
    </div>
  </header>
  <nav class="menubar">
    <svg class="menu-ic"><use href="#erd"/></svg>
    <span>File</span><span>Edit</span><span>View</span><span>Format</span><span>Model</span><span>Database</span><span>Tools</span><span>Services</span><span>Window</span><span>Help</span>
    <div class="mdibtns">
      <i class="mdib"><svg width="11" height="11" viewBox="0 0 11 11"><path d="M2 8h6v2H2z" fill="#74879c"/></svg></i>
      <i class="mdib"><svg width="11" height="11" viewBox="0 0 11 11"><path d="M1 4.500h6v5H1zM3.500 4V1.500h6v5H7.500" fill="none" stroke="#74879c" stroke-width="1.200"/></svg></i>
      <i class="mdib"><svg width="11" height="11" viewBox="0 0 11 11"><path d="M2 2l7 7M9 2L2 9" stroke="#74879c" stroke-width="2"/></svg></i>
    </div>
  </nav>

  <section class="tools">
    <div class="trow r1">
      <div class="tbar t1">
        <i class="grip"></i>
        <b class="b"><svg><use href="#new"/></svg></b><b class="b"><svg><use href="#open"/></svg></b><b class="b"><svg><use href="#save"/></svg></b><i class="sep"></i>
        <b class="b"><svg><use href="#print"/></svg></b><i class="sep"></i>
        <b class="b"><svg><use href="#bino"/></svg></b><b class="b"><svg><use href="#binoab"/></svg></b><i class="sep"></i>
        <b class="b"><svg><use href="#entin"/></svg></b><b class="b"><svg><use href="#entout"/></svg></b><i class="sep"></i>
        <b class="b"><svg><use href="#tag"/></svg></b><b class="b on"><svg><use href="#listy"/></svg></b><b class="b"><svg><use href="#listb"/></svg></b><i class="sep"></i>
        <b class="b"><svg><use href="#undo"/></svg></b><b class="b"><svg><use href="#dot"/></svg></b><i class="sep"></i>
        <b class="b"><svg><use href="#zoomm"/></svg></b><b class="b"><svg><use href="#zoomp"/></svg></b><b class="b"><svg><use href="#zoomg"/></svg></b><b class="b"><svg><use href="#zoomt"/></svg></b><b class="b"><svg><use href="#zoomf"/></svg></b><i class="sep"></i>
        <b class="b"><svg><use href="#layout"/></svg></b><b class="b s"><svg><use href="#down"/></svg></b><i class="sep"></i>
        <div class="combo physical"><span>Physical</span><i class="carr"></i></div>
      </div>
      <div class="tbar t2">
        <i class="grip"></i>
        <b class="b on"><svg><use href="#point"/></svg></b><b class="b"><svg><use href="#entity"/></svg></b><b class="b"><svg><use href="#view"/></svg></b><b class="b"><svg><use href="#rel1"/></svg></b><b class="b"><svg><use href="#rel2"/></svg></b><b class="b"><svg><use href="#rel3"/></svg></b>
      </div>
      <div class="tbar t3">
        <i class="grip"></i>
        <b class="b"><svg><use href="#drect"/></svg></b><b class="b"><svg><use href="#drrect"/></svg></b><b class="b"><svg><use href="#dell"/></svg></b><b class="b"><svg><use href="#dline"/></svg></b><b class="b"><svg><use href="#dpin"/></svg></b><b class="b"><svg><use href="#dtag"/></svg></b><b class="b"><svg><use href="#dtext"/></svg></b>
      </div>
    </div>
    <div class="trow r2">
      <div class="tbar t4">
        <i class="grip"></i>
        <div class="combo c1"><i class="carr"></i></div><div class="combo c2"><i class="carr"></i></div><i class="sep"></i>
        <b class="b"><svg><use href="#gsq"/></svg></b><b class="b"><svg><use href="#gsq"/></svg></b><b class="b"><svg><use href="#gsq"/></svg></b><b class="b"><svg><use href="#gsq"/></svg></b><i class="sep"></i>
        <b class="b n"><svg><use href="#gh1"/></svg></b><b class="b s"><svg><use href="#downg"/></svg></b>
        <b class="b n"><svg><use href="#gh2"/></svg></b><b class="b s"><svg><use href="#down"/></svg></b>
        <b class="b n"><svg><use href="#gh3"/></svg></b><b class="b s"><svg><use href="#downg"/></svg></b>
      </div>
      <div class="tbar t5">
        <i class="grip"></i>
        <b class="b"><svg><use href="#gal1"/></svg></b><b class="b"><svg><use href="#gal2"/></svg></b><b class="b"><svg><use href="#gal3"/></svg></b><b class="b"><svg><use href="#gal4"/></svg></b><i class="sep"></i>
        <b class="b"><svg><use href="#gal5"/></svg></b><b class="b"><svg><use href="#gal6"/></svg></b><b class="b"><svg><use href="#gal7"/></svg></b><b class="b"><svg><use href="#gal7"/></svg></b>
      </div>
    </div>
    <div class="trow r3">
      <div class="tbar t6">
        <i class="grip"></i>
        <b class="b"><svg><use href="#g1"/></svg></b><b class="b"><svg><use href="#g2"/></svg></b><i class="sep"></i>
        <b class="b"><svg><use href="#glock"/></svg></b><i class="sep"></i>
        <b class="b"><svg><use href="#gblob"/></svg></b><b class="b"><svg><use href="#gsq"/></svg></b><i class="sep"></i>
        <b class="b"><svg><use href="#gpuz"/></svg></b><b class="b"><svg><use href="#gref"/></svg></b><b class="b"><svg><use href="#gmag"/></svg></b><b class="b"><svg><use href="#gsh"/></svg></b><i class="sep"></i>
        <b class="b"><svg><use href="#rela"/></svg></b><b class="b"><svg><use href="#gcl"/></svg></b><i class="sep"></i>
        <b class="b"><svg><use href="#gppl"/></svg></b>
      </div>
      <div class="tbar t7">
        <i class="grip"></i>
        <b class="b"><svg><use href="#gear1"/></svg></b><b class="b"><svg><use href="#gear2"/></svg></b><b class="b"><svg><use href="#brack"/></svg></b><b class="b"><svg><use href="#cylm"/></svg></b><b class="b"><svg><use href="#sql"/></svg></b>
      </div>
      <div class="tbar t8">
        <i class="grip"></i>
        <b class="b"><svg><use href="#gtree"/></svg></b><b class="b"><svg><use href="#gorg"/></svg></b><b class="b"><svg><use href="#gorg2"/></svg></b><b class="b"><svg><use href="#gorg2"/></svg></b><b class="b"><svg><use href="#gcols"/></svg></b><b class="b"><svg><use href="#grows"/></svg></b><b class="b"><svg><use href="#gid"/></svg></b><b class="b"><svg><use href="#giu"/></svg></b><b class="b"><svg><use href="#gh"/></svg></b><b class="b"><svg><use href="#gnote"/></svg></b><b class="b"><svg><use href="#gdia"/></svg></b><b class="b"><svg><use href="#gback"/></svg></b><b class="b"><svg><use href="#gfin"/></svg></b>
      </div>
    </div>
  </section>

  <main class="main">
    <aside class="side">
      <div class="dock-head">
        <i class="dock-grip"></i>
        <i class="dock-btn"><svg width="9" height="7" viewBox="0 0 9 7"><path d="M1 2h7L4.500 6z" fill="#808080"/></svg></i>
        <i class="dock-btn"><svg width="9" height="9" viewBox="0 0 9 9"><path d="M1 1l7 7M8 1L1 8" stroke="#000" stroke-width="1.600"/></svg></i>
      </div>
      <div class="dock-tools">
        <b class="b"><svg><use href="#gprev"/></svg></b><b class="b"><svg><use href="#gnext"/></svg></b><i class="sep"></i>
        <b class="b"><svg><use href="#prop"/></svg></b><b class="b"><svg><use href="#gtrash"/></svg></b><i class="sep"></i>
        <b class="b"><svg><use href="#bino"/></svg></b><b class="b"><svg><use href="#gbinoab"/></svg></b><i class="sep"></i>
        <b class="b"><svg><use href="#book"/></svg></b>
      </div>
      <div class="tree">
        <div class="root">
          <i class="exp minus"></i>
          <svg class="root-ic" width="12" height="14" viewBox="0 0 12 14"><path d="M1.500.5h6l3 3v10h-9z" fill="#fffdf0" stroke="#000"/><path d="M7.500.5v3h3" fill="none" stroke="#000"/></svg>
          <span class="root-lbl">Model_1</span>
        </div>
        <ul class="nodes">
          <li><svg><use href="#t-tag"/></svg>Aggregates</li>
          <li><svg><use href="#t-ppl"/></svg>Application Roles</li>
          <li><svg><use href="#t-tag"/></svg>Assemblies</li>
          <li><svg><use href="#t-key"/></svg>Asymmetric Keys</li>
          <li><svg><use href="#t-cert"/></svg>Certificates</li>
          <li><svg><use href="#t-lock"/></svg>Credentials</li>
          <li><svg><use href="#t-doc"/></svg>Data Movement Rules</li>
          <li><svg><use href="#t-src"/></svg>Data Movement Sources</li>
          <li><i class="exp"></i><svg><use href="#t-role"/></svg>Database Roles</li>
          <li><svg><use href="#t-cyl"/></svg>Databases</li>
          <li><i class="exp"></i><svg><use href="#t-box"/></svg>Default Values</li>
          <li><i class="exp"></i><svg><use href="#t-dom"/></svg>Domains</li>
          <li><svg><use href="#t-file"/></svg>Files</li>
          <li><svg><use href="#t-cat"/></svg>Fulltext Catalogs</li>
          <li><svg><use href="#t-fn"/></svg>Functions</li>
          <li><i class="exp"></i><svg><use href="#t-log"/></svg>Logins</li>
          <li><svg><use href="#t-grid"/></svg>Model Sources</li>
          <li><svg><use href="#t-part"/></svg>Partition Functions</li>
          <li><svg><use href="#t-part"/></svg>Partition Schemes</li>
          <li><svg><use href="#t-perm"/></svg>Permissions</li>
          <li><i class="exp"></i><svg><use href="#t-rel"/></svg>Relationships</li>
          <li><i class="exp"></i><svg><use href="#t-sch"/></svg>Schemas</li>
          <li><svg><use href="#t-scr"/></svg>Script Templates</li>
          <li><svg><use href="#t-prc"/></svg>Stored Procedures</li>
          <li><i class="exp"></i><svg><use href="#t-area"/></svg>Subject Areas</li>
          <li><svg><use href="#t-gear"/></svg>Symmetric Keys</li>
          <li><svg><use href="#t-view"/></svg>Synonyms</li>
          <li><i class="exp"></i><svg><use href="#t-tab"/></svg>Tables</li>
          <li><svg><use href="#t-xml"/></svg>Transforms</li>
          <li><i class="exp"></i><svg><use href="#t-scr"/></svg>Trigger Templates</li>
          <li><svg><use href="#t-trig"/></svg>Triggers</li>
          <li><i class="exp"></i><svg><use href="#t-log"/></svg>User Ids</li>
          <li><svg><use href="#t-perm"/></svg>Validation Rules</li>
          <li><svg><use href="#t-view"/></svg>Views</li>
          <li><svg><use href="#t-xml"/></svg>XML Schema Collections</li>
        </ul>
      </div>
      <div class="dock-tabs">
        <span class="dtab on"><svg width="12" height="14" viewBox="0 0 12 14"><path d="M1.500.5h6l3 3v10h-9z" fill="#fffdf0" stroke="#000"/><path d="M7.500.5v3h3" fill="none" stroke="#000"/></svg>Model</span>
        <span class="dtab"><svg width="14" height="14" viewBox="0 0 14 14"><path d="M.5.500h13v13H.5zM.5 3.500h13M4.500 6.500h9v7h-9z" fill="none" stroke="#2b4a72"/></svg>Subject Area</span>
      </div>
    </aside>

    <section class="mdi">
      <div class="mdi-top">
        <div class="view">
          <div class="view-row">
            <div class="canvas">
              <svg class="links" width="1682" height="840" viewBox="0 0 1682 840">
                <g class="dash">
                  <path d="M301 164H441"/>
                  <path d="M173 273V345"/>
                  <path d="M490 259V435H559"/>
                </g>
                <g class="solid">
                  <path d="M310 157v15M301 164h9M441 157v15M441 164l9-7M441 164l9 8M441 164h9"/>
                  <path d="M166 283h14M173 273v10M166 335h14M173 335v10M173 335l-6 10M173 335l6 10"/>
                  <path d="M483 259h14M490 247v12M490 259l-6-11M490 259l6-11M552 435h16M559 428v14"/>
                  <path d="M718 175H860M728 168v14M849 168v14M849 175l11-7M849 175l11 7"/>
                  <path d="M988 233V337H1075M981 243h14M988 243l-6-10M988 243l6-10M1066 330v14"/>
                </g>
                <path class="arrow" d="M1403 374H1262M1274 369l-11 5 11 5"/>
              </svg>

              <div class="entity e-cliente">
                <h2>CLIENTE</h2>
                <div class="box">
                  <div class="key"><p>IDCLIENTE: integer NOT NULL</p></div>
                  <div class="attrs"><p>DNI: integer NOT NULL</p><p>NOMBRE: varchar(max) NOT NULL</p><p>APELLIDOS: varchar(max) NOT NULL</p><p>RUC: integer NULL</p><p>DIRECCION: varchar(max) NULL</p><p>TELEFONO: integer NULL</p></div>
                </div>
              </div>
              <div class="entity e-pedido">
                <h2>PEDIDO</h2>
                <div class="box">
                  <div class="key"><p>IDPEDIDO: integer NOT NULL</p></div>
                  <div class="attrs tall"><p class="fk">IDMESERO: integer NOT NULL (FK)</p><p class="fk">IDCLIENTE: integer NOT NULL (FK)</p><p>NUM_MESA: integer NOT NULL</p><p>FECHA: datetime NOT NULL</p></div>
                </div>
              </div>
              <div class="entity e-detalle">
                <h2>DETALLE_PEDIDO</h2>
                <div class="box round">
                  <div class="key"><p class="fk">IDPEDIDO: integer NOT NULL (FK)</p><p class="fk">IDPRODUCTO: integer NOT NULL (FK)</p></div>
                  <div class="attrs short"><p>CANTIDAD: integer NOT NULL</p></div>
                </div>
              </div>
              <div class="entity e-comprobante">
                <h2>COMPROBANTE</h2>
                <div class="box">
                  <div class="key"><p>IDCOMPROB: integer NOT NULL</p></div>
                  <div class="attrs"><p>TIPO: varchar(20) NOT NULL</p><p class="fk">IDCLIENTE: integer NOT NULL (FK)</p><p>MONTO: money NOT NULL</p><p>FECHA: datetime NOT NULL</p></div>
                </div>
              </div>
              <div class="entity e-mesero">
                <h2>MESERO</h2>
                <div class="box">
                  <div class="key"><p>IDMESERO: integer NOT NULL</p></div>
                  <div class="attrs"><p>DNI: integer NOT NULL</p><p>NOMBRE: varchar(max) NOT NULL</p><p>APELLIDOS: varchar(max) NOT NULL</p></div>
                </div>
              </div>
              <div class="entity e-producto">
                <h2>PRODUCTO</h2>
                <div class="box">
                  <div class="key"><p>IDPRODUCTO: integer NOT NULL</p></div>
                  <div class="attrs"><p>DESCRIPCION: varchar(max) NOT NULL</p><p>PRECIO: money NOT NULL</p><p>TIPO: varchar(20) NOT NULL</p></div>
                </div>
              </div>

              <div class="note-box">
                <div class="nrow"><span>IDCAT</span><span>NOMBRE</span></div>
                <div class="nrow">-------------------------------------</div>
                <div class="nrow"><span>1</span><span>BEBIDA</span></div>
                <div class="nrow"><span>2</span><span>LICOR</span></div>
                <div class="nrow"><span>3</span><span>PESACADO</span></div>
                <div class="nrow nar"><span>4</span><span>CARNES</span></div>
              </div>
              <div class="note-text">Precio de<br>Lista</div>
              <i class="caret"></i>
            </div>
            <div class="vscroll">
              <svg width="15" height="15" viewBox="0 0 15 15"><path d="M3 10l4.500-4.500L12 10" fill="none" stroke="#606060" stroke-width="2"/></svg>
              <i class="vthumb"></i>
              <svg class="vdown" width="15" height="15" viewBox="0 0 15 15"><path d="M3 5l4.500 4.500L12 5" fill="none" stroke="#606060" stroke-width="2"/></svg>
            </div>
          </div>
          <div class="hscroll">
            <svg width="15" height="15" viewBox="0 0 15 15"><path d="M10 3L5.500 7.500 10 12" fill="none" stroke="#606060" stroke-width="2"/></svg>
            <i class="hthumb"></i>
            <svg class="hright" width="15" height="15" viewBox="0 0 15 15"><path d="M5 3l4.500 4.500L5 12" fill="none" stroke="#606060" stroke-width="2"/></svg>
          </div>
        </div>
        <div class="stack"></div>
      </div>
      <div class="tabstrip">
        <svg class="tabart" width="1708" height="28" viewBox="0 0 1708 28">
          <path d="M20 7H136L147 22L144 26H32Q29 26 28 23Z" fill="#ebebeb" stroke="#000"/>
          <path d="M139 1H0M3 4H139M6 7H20" fill="none" stroke="#000"/>
          <path d="M139 1Q144 1 147 12L153 24Q154 26 157 26H264Q267 26 268 24L273 10Q275 7 280 7H1706" fill="#fff" stroke="#000"/>
          <path d="M279 1H1700M279 4H1703" stroke="#000" fill="none"/>
          <path d="M280 7.500H1706" stroke="#000" stroke-width="2"/>
        </svg>
        <span class="tab-a">Diagrama de Entidades</span>
        <span class="tab-b">Diagrama de Atributos</span>
      </div>
    </section>
  </main>

  <footer class="status">
    <span class="sp sp-main">eImportedFromPrev</span>
    <span class="sp sp-a"></span><span class="sp sp-b"></span><span class="sp sp-b"></span>
    <span class="sp sp-sql">SQL Server 2005/20</span>
  </footer>

  <div class="taskbar">
    <span class="start"><svg width="16" height="16"><use href="#win"/></svg></span>
    <div class="search"><svg width="18" height="18"><use href="#srch"/></svg><span>Escribe aquí para buscar</span></div>
    <span class="task tv"><svg width="18" height="18"><use href="#tv"/></svg></span>
    <span class="task"><svg><use href="#mail"/></svg></span>
    <span class="task run"><svg><use href="#edge"/></svg></span>
    <span class="task"><svg><use href="#opera"/></svg></span>
    <span class="task run"><svg><use href="#avast"/></svg></span>
    <span class="task run multi"><svg><use href="#fox"/></svg></span>
    <span class="task run multi"><svg><use href="#chrome"/></svg></span>
    <span class="task run multi"><svg><use href="#expl"/></svg></span>
    <span class="task run active"><svg><use href="#etask"/></svg></span>
    <span class="task run multi"><svg><use href="#paint"/></svg></span>
    <span class="task run"><svg><use href="#note"/></svg></span>
    <span class="task run"><svg><use href="#vbox"/></svg></span>
    <span class="task run"><svg><use href="#sqlt"/></svg></span>
    <span class="task run"><svg><use href="#cmd"/></svg></span>
    <span class="task run"><svg><use href="#vsc"/></svg></span>
    <div class="tray">
      <span class="ti"><svg width="14" height="14"><use href="#chev"/></svg></span>
      <span class="ti"><svg width="18" height="18"><use href="#dbx"/></svg></span>
      <span class="ti"><svg width="18" height="18"><use href="#mic"/></svg></span>
      <span class="ti"><svg width="18" height="18"><use href="#sync"/></svg></span>
      <span class="ti"><svg width="18" height="18"><use href="#batt"/></svg></span>
      <span class="ti"><svg width="18" height="18"><use href="#net"/></svg></span>
      <span class="ti"><svg width="18" height="18"><use href="#vol"/></svg></span>
      <span class="lang">ESP</span>
      <span class="clock"><span>15:43</span><span>27/08/2020</span></span>
      <span class="notif"><svg width="20" height="20"><use href="#notif"/></svg><em>2</em></span>
    </div>
  </div>
</div>
</body>
</html>
```
FILE: styles.css
```css
* { box-sizing: border-box; }
html, body { margin: 0; padding: 0; width: 1920px; height: 1080px; overflow: hidden; background: #fff; }
body { font-family: "Roboto", "Liberation Sans", sans-serif; color: #000; }
.defs { position: absolute; }
.app { width: 1920px; height: 1080px; display: flex; flex-direction: column; }
i, b { font-style: normal; font-weight: normal; }

/* title + menu */
.titlebar { height: 24px; flex: none; display: flex; align-items: center; padding-left: 3px; background: #fff; font-size: 12px; }
.title-ic { width: 15px; height: 15px; margin-right: 5px; flex: none; }
.title-txt { white-space: nowrap; }
.winctl { margin-left: auto; display: flex; margin-right: 2px; }
.menubar { height: 17px; flex: none; display: flex; align-items: center; font-size: 12px; gap: 13px; padding-left: 7px; background: #fff; }
.menu-ic { width: 16px; height: 16px; margin-right: -6px; flex: none; }
.mdibtns { margin-left: auto; display: flex; gap: 2px; margin-right: 1px; }
.mdib { width: 17px; height: 17px; border: 1px solid #dcdcdc; display: flex; align-items: center; justify-content: center; }

/* toolbars */
.tools { background: #f0f0f0; flex: none; height: 95px; }
.trow { display: flex; }
.r1 { height: 32px; }
.r2 { height: 31px; }
.r3 { height: 32px; }
.tbar { display: flex; align-items: center; height: 100%; border-right: 1px solid #a0a0a0; border-bottom: 2px solid #c4c4c4; padding-left: 2px; flex: none; }
.r1 .tbar { padding-top: 2px; }
.t1 { width: 641px; }
.t2 { width: 155px; padding-left: 5px; }
.t3 { width: 178px; margin-left: 23px; padding-left: 3px; }
.t4 { width: 475px; }
.t5 { width: 208px; }
.t6 { width: 333px; }
.t7 { width: 130px; padding-left: 3px; }
.t8 { width: 316px; }
.grip { width: 6px; height: 24px; margin-right: 0; border-left: 1px solid #a8a8a8; border-right: 1px solid #a8a8a8; flex: none; }
.sep { width: 1px; height: 22px; margin: 0 3.500px; background: #a8a8a8; flex: none; }
.b { width: 23px; height: 24px; display: flex; align-items: center; justify-content: center; flex: none; }
.b.n { width: 22px; }
.b.s { width: 14px; }
.b svg { width: 18px; height: 18px; }
.b.s svg { width: 14px; height: 18px; }
.b.on { background: #fafafa; outline: 1px solid #dcdcdc; outline-offset: -1px; }
.combo { height: 21px; border: 2px solid; border-color: #808080 #e6e6e6 #e6e6e6 #808080; outline: 1px solid #d8d8d8; outline-offset: -1px; display: flex; align-items: center; flex: none; position: relative; font-family: "Liberation Sans", sans-serif; }
.physical { width: 108px; font-size: 13.500px; letter-spacing: .8px; color: #808080; padding-left: 3px; }
.c1 { width: 168px; margin-left: 2px; }
.c2 { width: 68px; margin-left: 1px; }
.carr { position: absolute; right: 0; top: 0; bottom: 0; width: 15px; background: #e6e6e6; border-left: 1px solid #fff; }
.carr::after { content: ""; position: absolute; left: 3px; top: 6px; border: 4px solid transparent; border-top: 5px solid #808080; }

/* main */
.main { height: 887px; flex: none; display: flex; border-top: 1px solid #808080; background: #f0f0f0; }
.side { width: 209px; flex: none; display: flex; flex-direction: column; padding: 0 0 4px 3px; }
.dock-head { height: 13px; display: flex; align-items: center; gap: 2px; padding-left: 2px; }
.dock-grip { width: 167px; height: 5px; border-top: 1px solid #a8a8a8; border-bottom: 1px solid #a8a8a8; }
.dock-btn { width: 12px; height: 10px; border: 1px solid #c8c8c8; display: flex; align-items: center; justify-content: center; background: #f4f4f4; }
.dock-tools { height: 26px; display: flex; align-items: center; margin-left: -1px; margin-bottom: 7px; }
.dock-tools .sep { margin: 0 2.500px; }
.tree { flex: 1; margin-left: 4px; margin-right: 13px; background: #fff; border: 1px solid #6e6e6e; font-size: 10.600px; }
.root { height: 16px; position: relative; display: flex; align-items: center; padding-left: 23px; }
.root-ic { flex: none; }
.root-lbl { margin-left: 4px; background: #e2e2e2; height: 16px; line-height: 16px; padding: 0 3px; font-size: 10.600px; }
.exp { position: absolute; left: 24px; top: 4px; width: 9px; height: 9px; border: 1px solid #808080; background: #fff; z-index: 1; }
.exp::before { content: ""; position: absolute; left: 1px; right: 1px; top: 3px; height: 1px; background: #000; }
.exp::after { content: ""; position: absolute; top: 1px; bottom: 1px; left: 3px; width: 1px; background: #000; }
.minus { left: 4px; top: 4px; }
.minus::after { display: none; }
.root::after { content: ""; position: absolute; left: 13px; width: 6px; top: 8px; border-top: 1px dotted #808080; }
.nodes { list-style: none; margin: 0; padding: 0; position: relative; }
.nodes::before { content: ""; position: absolute; left: 28px; top: 0; bottom: 8px; border-left: 1px dotted #808080; }
.nodes li { height: 16px; position: relative; display: flex; align-items: center; padding-left: 39px; white-space: nowrap; }
.nodes li::before { content: ""; position: absolute; left: 29px; width: 9px; top: 8px; border-top: 1px dotted #808080; }
.nodes li svg { width: 17px; height: 16px; margin-right: 6px; flex: none; }
.dock-tabs { height: 22px; margin-top: 4px; display: flex; font-size: 11px; }
.dtab { display: flex; align-items: center; gap: 5px; padding-left: 4px; height: 22px; width: 94px; border: 1px solid #dcdcdc; border-left: 0; }
.dtab.on { width: 65px; background: #d6e6f5; padding-left: 8px; gap: 6px; border: 0; }

.mdi { flex: 1; min-width: 0; border-left: 1px solid #909090; display: flex; flex-direction: column; background: #fff; }
.mdi-top { display: flex; height: 856px; flex: none; border-left: 2px solid #000; border-top: 1px solid #000; }
.view { width: 1698px; flex: none; display: flex; flex-direction: column; }
.view-row { height: 840px; display: flex; flex: none; }
.canvas { width: 1682px; height: 840px; position: relative; overflow: hidden; background: #fff; font-family: "Liberation Sans", Arial, sans-serif; flex: none; }
.vscroll { width: 16px; background: #f0f0f0; position: relative; }
.vscroll svg { display: block; margin-top: 2px; }
.vthumb { position: absolute; left: 0; top: 55px; width: 16px; height: 17px; background: #cdcdcd; }
.vscroll .vdown { position: absolute; bottom: 0; left: 0; }
.hscroll { height: 15px; background: #f0f0f0; position: relative; display: flex; align-items: center; }
.hthumb { position: absolute; left: 17px; top: 0; width: 17px; height: 15px; background: #cdcdcd; }
.hscroll .hright { position: absolute; right: 16px; top: 0; }
.stack { width: 10px; flex: none; background: linear-gradient(to right, #000 0 1px, #fff 1px 3px, #000 3px 4px, #fff 4px 6px, #000 6px 7px, #fff 7px 10px); }
.tabstrip { flex: 1; margin-left: 0; position: relative; font-size: 11px; background: #fff; border-left: 2px solid #000; }
.tabart { position: absolute; left: 0; top: 0; }
.tab-a, .tab-b { position: absolute; top: 9px; line-height: 14px; white-space: nowrap; }
.tab-a { left: 28px; }
.tab-b { left: 154px; }

/* diagram */
.links { position: absolute; left: 0; top: 0; z-index: 1; }
.links path { fill: none; stroke: #000; stroke-width: 1; }
.links .dash path { stroke-dasharray: 26 9; }
.links .arrow { stroke: #ff8000; stroke-width: 3; }
.entity { position: absolute; font-size: 13.100px; }
.entity h2 { margin: 0; height: 26px; line-height: 24px; font-size: 20px; font-weight: 700; color: #0000ff; white-space: nowrap; }
.box { border: 1px solid #000; background: #fff; }
.box.round { border-radius: 14px; }
.key { padding: 8px 0 7px 11px; border-bottom: 1px solid #000; }
.attrs { padding: 8px 0 6px 11px; }
.attrs.tall { padding-bottom: 16px; }
.attrs.short { padding-bottom: 17px; }
.entity p { margin: 0; height: 16px; line-height: 16px; white-space: nowrap; }
.entity .fk { color: #2e00a0; }
.e-cliente { left: 50px; top: 102px; width: 250px; }
.e-pedido { left: 450px; top: 100px; width: 268px; }
.e-detalle { left: 859px; top: 117px; width: 278px; }
.e-comprobante { left: 52px; top: 345px; width: 236px; }
.e-mesero { left: 568px; top: 361px; width: 249px; }
.e-producto { left: 1075px; top: 283px; width: 268px; }
.note-box { position: absolute; left: 909px; top: 439px; width: 687px; height: 395px; border: 3px solid #ff8000; padding: 23px 0 0 51px; color: #ff8000; font-size: 48px; line-height: 55px; white-space: nowrap; }
.nrow { display: flex; height: 55px; }
.nrow span:first-child { width: 196px; flex: none; }
.nrow.nar span:first-child { width: 183px; }
.note-text { position: absolute; left: 1406px; top: 344px; color: #ff8000; font-size: 48px; line-height: 55px; white-space: nowrap; }
.caret { position: absolute; left: 1410px; top: 464px; width: 4px; height: 45px; background: #ff8000; }

/* status */
.status { height: 17px; flex: none; display: flex; gap: 3px; padding: 2px 11px 0 4px; background: #f0f0f0; font-size: 10.800px; line-height: 13px; }
.sp { border: 1px solid #d0d0d0; height: 15px; white-space: nowrap; }
.sp-main { width: 1695px; padding-left: 1px; }
.sp-a { width: 60px; }
.sp-b { width: 19px; }
.sp-sql { width: 99px; padding-left: 1px; background: #f8f8f8; }

/* taskbar */
.taskbar { height: 40px; flex: none; display: flex; background: #cfdbe6; align-items: stretch; }
.start { width: 49px; display: flex; align-items: center; justify-content: center; flex: none; }
.search { width: 342px; flex: none; background: #fff; display: flex; align-items: center; padding-left: 11px; gap: 10px; font-size: 14.600px; color: #333; border: 1px solid #d8e0e8; border-bottom: 0; }
.task { width: 49px; flex: none; display: flex; align-items: center; justify-content: center; position: relative; }
.task svg { width: 24px; height: 24px; }
.task.tv { width: 51.500px; }
.task.tv svg { width: 18px; height: 18px; }
.task.run::after { content: ""; position: absolute; left: 4px; right: 4px; bottom: 0; height: 2px; background: #0078d7; }
.task.multi::after { right: 12px; left: 4px; box-shadow: 8px 0 0 #5aa6e2; }
.task.active { background: #ecf1f6; }
.task.active::after { left: 0; right: 0; }
.tray { margin-left: auto; display: flex; align-items: center; padding-right: 12px; font-size: 12px; color: #222; }
.ti { width: 24px; display: flex; align-items: center; justify-content: center; flex: none; }
.lang { width: 35px; text-align: center; flex: none; }
.clock { width: 72px; display: flex; flex-direction: column; align-items: center; gap: 2px; line-height: 15px; flex: none; }
.notif { width: 40px; height: 40px; position: relative; display: flex; align-items: center; justify-content: center; flex: none; }
.notif em { position: absolute; left: 20px; top: 19px; width: 16px; height: 16px; border-radius: 50%; background: #d8d8d8; border: 1px solid #666; font-style: normal; font-size: 12px; line-height: 14px; text-align: center; }
```
